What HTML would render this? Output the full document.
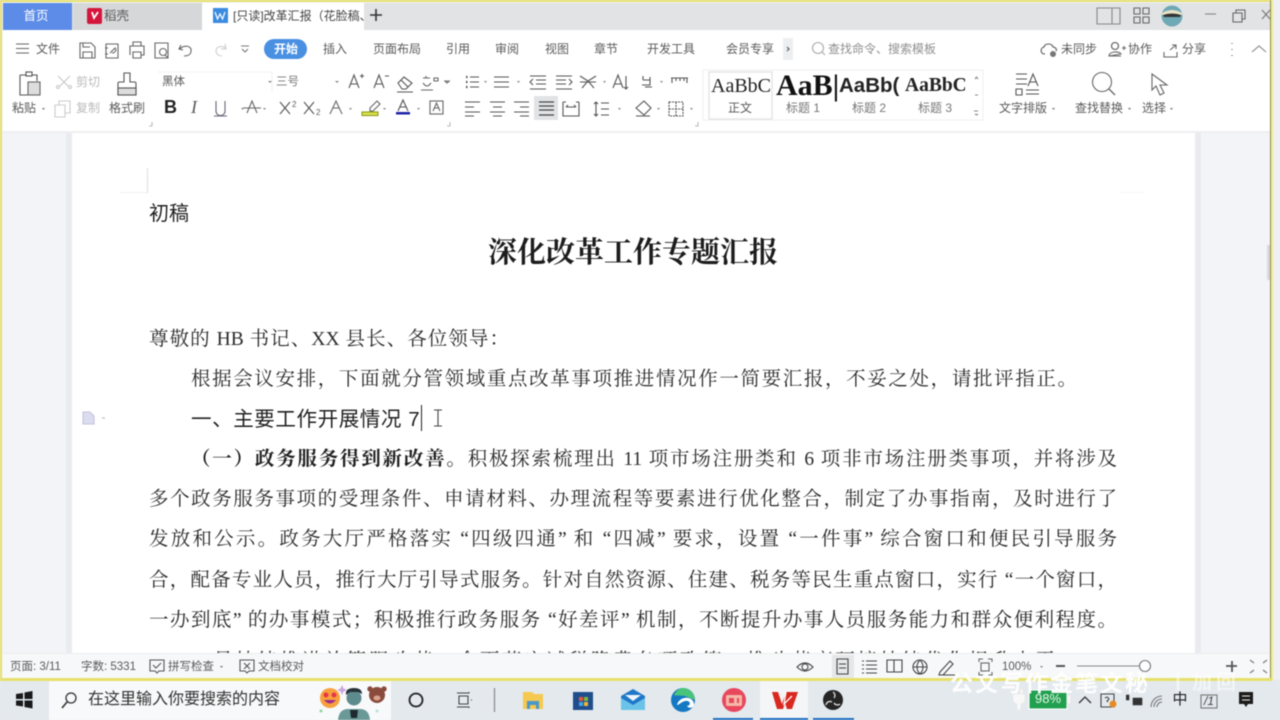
<!DOCTYPE html>
<html lang="zh"><head><meta charset="utf-8"><title>改革汇报</title>
<style>
html,body{margin:0;padding:0;background:#f0f1f4}
#w{position:relative;width:1280px;height:720px;overflow:hidden;background:#eef0f3;font-family:"Liberation Sans","Noto Sans CJK SC",sans-serif;color:#555;filter:blur(.6px)}
.b{position:absolute}
.t{position:absolute;white-space:nowrap;font-size:12px;line-height:20px;height:20px;color:#5a5a5a}
.c{transform:translateX(-50%)}
.l{position:absolute;left:149px;width:968px;height:40px;overflow:hidden;line-height:40px;font-family:"Liberation Serif","Noto Serif CJK SC",serif;font-size:19.5px;color:#2a2a2a;text-align:justify;text-align-last:justify}
.i{padding-left:42px;width:926px}
svg{position:absolute;left:0;top:0}
</style></head><body><div id="w">
<!-- window background -->
<div class="b" style="left:0;top:0;width:1272px;height:680px;background:#f3f4f7"></div>
<div class="b" style="left:3px;top:3px;width:1267px;height:27px;background:#e1e3e4"></div>
<div class="b" style="left:3px;top:3px;width:69px;height:27px;background:#5d8ce8"></div>
<div class="b" style="left:73px;top:3px;width:129px;height:27px;background:#d6d7d9"></div>
<div class="b" style="left:202px;top:3px;width:162px;height:27px;background:#fff"></div>
<div class="b" style="left:3px;top:30px;width:1267px;height:101px;background:#fff"></div>
<div class="b" style="left:3px;top:131px;width:1267px;height:2px;background:#eeeff2"></div>
<!-- page -->
<div class="b" style="left:66px;top:133px;width:6px;height:520px;background:#eaebef"></div>
<div class="b" style="left:1195px;top:133px;width:6px;height:520px;background:#eaebef"></div>
<div class="b" style="left:72px;top:133px;width:1123px;height:520px;background:#fff;overflow:hidden"></div>
<div class="b" style="left:147px;top:168px;width:1px;height:25px;background:#dcdcdc"></div>
<div class="b" style="left:120px;top:192px;width:27px;height:1px;background:#f2f2f2"></div>
<div class="b" style="left:1119px;top:192px;width:26px;height:1px;background:#f7f7f7"></div>
<!-- doc text -->
<div class="t" style="left:149px;top:204px;font-size:20px;color:#222">初稿</div>
<div class="t c" style="left:633px;top:243px;height:20px;font-family:'Liberation Serif','Noto Serif CJK SC',serif;font-weight:700;font-size:29px;line-height:20px;color:#1c1c1c">深化改革工作专题汇报</div>
<div class="l" style="top:320px;width:360px">尊敬的 HB 书记、XX 县长、各位领导：</div>
<div class="l i" style="top:360px;width:886px">根据会议安排，下面就分管领域重点改革事项推进情况作一简要汇报，不妥之处，请批评指正。</div>
<div class="t" style="left:191px;top:410px;font-size:20.5px;color:#222;letter-spacing:.6px">一、主要工作开展情况 7</div>
<div class="b" style="left:421px;top:405px;width:1px;height:26px;background:#222"></div>
<div class="l i" style="top:440px"><b style="color:#1f1f1f">（一）政务服务得到新改善</b>。积极探索梳理出 11 项市场注册类和 6 项非市场注册类事项，并将涉及</div>
<div class="l" style="top:480px">多个政务服务事项的受理条件、申请材料、办理流程等要素进行优化整合，制定了办事指南，及时进行了</div>
<div class="l" style="top:520px">发放和公示。政务大厅严格落实 “四级四通” 和 “四减” 要求，设置 “一件事” 综合窗口和便民引导服务</div>
<div class="l" style="top:561px">合，配备专业人员，推行大厅引导式服务。针对自然资源、住建、税务等民生重点窗口，实行 “一个窗口，</div>
<div class="l" style="top:601px">一办到底” 的办事模式；积极推行政务服务 “好差评” 机制，不断提升办事人员服务能力和群众便利程度。</div>
<div class="l i" style="top:642px;width:886px">二是持续推进放管服改革，全面落实减税降费各项政策，推动营商环境持续优化提升水平。</div>
<!-- status bar -->
<div class="b" style="left:3px;top:653px;width:1267px;height:25px;background:#f7f8fa;border-top:1px solid #eceded"></div>
<!-- frame -->
<div class="b" style="left:0;top:0;width:1272px;height:2px;background:#e6e06a"></div>
<div class="b" style="left:0;top:0;width:2px;height:680px;background:#e6e06a"></div>
<div class="b" style="left:1270px;top:0;width:3px;height:680px;background:#f0ec90;border-left:1px solid #8c8a50;box-sizing:border-box"></div>
<div class="b" style="left:1267px;top:245px;width:3px;height:35px;background:#d8d9e0"></div>
<!-- taskbar -->
<div class="b" style="left:0;top:680px;width:1280px;height:40px;background:#e3e9ed"></div>
<div class="b" style="left:49px;top:681px;width:342px;height:39px;background:#f8f9fa"></div>
<div class="b" style="left:760px;top:680px;width:48px;height:40px;background:#f3f5f7"></div>
<div class="b" style="left:713px;top:718px;width:40px;height:2px;background:#1e6fc0"></div>
<div class="b" style="left:760px;top:718px;width:48px;height:2px;background:#1e6fc0"></div>
<div class="b" style="left:813px;top:718px;width:41px;height:2px;background:#1e6fc0"></div>
<div class="b" style="left:0;top:678px;width:1272px;height:3px;background:#e6e06a"></div>

<!-- icon layer -->
<svg width="1280" height="720" viewBox="0 0 1280 720" fill="none" stroke="#555" stroke-width="1.1">
<!-- tabs -->
<rect x="87" y="8" width="15" height="16" rx="2" fill="#d5163c" stroke="none"/>
<path d="M92 12l2 6 4-6" stroke="#fff" stroke-width="1.8"/>
<rect x="213" y="8" width="15" height="15" fill="#3a8be0" stroke="none"/>
<path d="M215 12l2.5 7 2.5-5 2.5 5 2.5-7" stroke="#fff" stroke-width="1.2"/>
<path d="M370 15h12M376 9v12" stroke="#333" stroke-width="1.6"/>
<!-- window ctrl -->
<path d="M1097 8h23v16h-23zM1112 8v16" stroke="#888"/>
<path d="M1134 8h6v6h-6zM1143 8h6v6h-6zM1134 17h6v6h-6zM1143 17h6v6h-6z" stroke="#666"/>
<circle cx="1172" cy="16" r="10.5" fill="#6fa9b5" stroke="none"/>
<path d="M1162 13q10-6 20 0v2h-20z" fill="#e8e2c8" stroke="none"/>
<path d="M1163 15q9-3 18 0l-1 2h-16z" fill="#333" stroke="none"/>
<path d="M1205 14h11" stroke="#888"/>
<path d="M1233 13h9v9h-9zM1236 13v-3h9v9h-3" stroke="#666"/>
<path d="M1262 10l8 9M1270 10l-8 9" stroke="#777"/>
<!-- qat -->
<path d="M16 44h13M16 48.500h13M16 53h13" stroke="#666"/>
<path d="M80 43h11l4 4v11h-15zM83 58v-6h9v6M83 43v4h7" stroke="#666"/>
<path d="M106 44h12v14h-12zM105 48h3M105 54h3M110 53l5-5c2 2 0 5-3 5" stroke="#666"/>
<path d="M133 46v-4h8v4M130 55v-9h14v9h-3M133 52h8v6h-8z" stroke="#666"/>
<path d="M155 43h13v15h-13zM163 52m-3.500 0a3.500 3.500 0 1 0 7 0a3.500 3.500 0 1 0-7 0M165 55l3 3" stroke="#666"/>
<path d="M181 45l-2 4 4 1M180 49c3-4 12-4 11 2 0 4-4 5-7 5" stroke="#666"/>
<path d="M225 44l1 5-5 0M226 49c-3-4-10-3-10 2 0 3 3 5 6 5" stroke="#ccc"/>
<path d="M241 46h8M242 49l3 3 3-3" stroke="#777"/>
<rect x="783" y="38" width="10" height="22" fill="#eceef0" stroke="none"/>
<path d="M787 47l2 2-2 2" stroke="#555"/>
<circle cx="818" cy="48" r="5.500" stroke="#aaa"/><path d="M822 52l3 3" stroke="#aaa"/>
<path d="M1045 54c-5 0-5-6-1-7 1-4 8-4 9 0 3 0 4 3 3 4" stroke="#555"/><circle cx="1053" cy="54" r="3" fill="#777" stroke="none"/>
<circle cx="1115" cy="46" r="3.500"/><path d="M1109 56c0-5 11-5 12-2zM1109 56h12M1122 48h4M1124 46v4" stroke="#666"/>
<path d="M1164 52v5h13v-5M1170 50l6-5M1172 45h4v4" stroke="#666"/>
<path d="M1232 43v1M1232 49v1M1232 55v1" stroke="#888" stroke-width="1.5"/>
<path d="M1252 52l7-6 7 6" stroke="#888"/>
<!-- paste -->
<path d="M20 75h17v6M20 75v20h9" stroke="#555"/><rect x="26" y="72" width="6" height="4" fill="#fff"/>
<rect x="28" y="82" width="12" height="13" fill="#ddd" stroke="#666"/>
<path d="M58 76l10 10M70 76l-10 10" stroke="#c8c8c8"/><circle cx="58" cy="87" r="1.500" stroke="#c8c8c8"/><circle cx="70" cy="87" r="1.500" stroke="#c8c8c8"/>
<path d="M55 105h10v12h-10zM59 105v-4h11v12h-5" stroke="#ccc"/>
<path d="M124 73h6v9h5q1 0 1 2v11h-18v-11q0-2 1-2h5z" stroke="#555"/><rect x="118" y="88" width="18" height="7" fill="#ddd" stroke="#555"/>
<path d="M149 126h3v-4M447 126h3v-4M695 126h3v-4" stroke="#bbb"/>
<!-- font boxes -->
<path d="M158 72h114v20" stroke="#f2f2f2"/>
<path d="M268 81l4 0-2 2zM335 81l4 0-2 2z" fill="#888" stroke="none"/>
<!-- fmt row1 -->
<path d="M349 88l5-13 5 13M351 84h7M360 76h4M362 74v4" stroke="#555"/>
<path d="M374 88l5-13 5 13M376 84h7M385 76h4" stroke="#555"/>
<path d="M398 83l6-6 8 6-6 6h-4zM401 80l7 7M397 92h16" stroke="#555"/>
<path d="M423 78h7M426 76v2M423 83c3 4 5 4 8 0M421 90h12" stroke="#666"/>
<path d="M434 78h4v3h-4zM445 81h4l-2 2z" stroke="#666"/>
<!-- fmt row2 -->
<path d="M216 101v10c0 6 9 6 9 0v-10M214 116h13" stroke="#667"/>
<path d="M247 113l5-12 5 12M243 108h18" stroke="#666"/>
<path d="M280 102l10 12M290 102l-10 12" stroke="#555"/>
<path d="M304 102l10 12M314 102l-10 12" stroke="#555"/>
<path d="M330 114l6-13 6 13M333 108h6" stroke="#666"/>
<path d="M370 108l7-7 3 3-7 7h-3z" stroke="#666"/><rect x="362" y="112" width="16" height="3.500" fill="#dde34a" stroke="#8a9a20"/>
<path d="M398 111l5-11 5 11M400 107h6" stroke="#555"/><rect x="396" y="112" width="14" height="2.500" fill="#1c22a8" stroke="none"/>
<rect x="430" y="101" width="13" height="13" stroke="#666"/><path d="M433 111l3.500-8 3.500 8M434.500 108h4" stroke="#666"/>
<path d="M263 108h3l-1.500 2zM241 108h3l-1.500 2zM349 108h3l-1.500 2zM383 108h3l-1.500 2zM417 108h3l-1.500 2zM447 81h3l-1.500 2z" fill="#888" stroke="none"/>
<!-- para row1 -->
<g stroke="#555">
<path d="M470 77h9M470 82h9M470 87h9M494 77h9M494 82h9M494 87h9"/>
<path d="M466 77h1.500M466 82h1.500M466 87h1.500" stroke-width="2.200"/>
<path d="M499 77h10M499 82h10M499 87h10"/>
<path d="M530 76h16M536 80h10M536 84h10M530 89h16M533 79l-3 3 3 3"/>
<path d="M556 76h16M556 80h10M556 84h10M556 89h16M569 79l3 3-3 3"/>
<path d="M580 76l8 5-6 7M596 76l-8 5 6 7M580 82h16"/>
<path d="M613 88l5-13 5 13M615 84h6M626 76v13M624 87l2 2 2-2"/>
<path d="M643 76v4M643 80h7M650 77v8h-8M645 87h7"/>
<path d="M671 78h17M672 78v5M687 78v5M676 78v3M680 78v3M684 78v3"/>
</g>
<rect x="534" y="96" width="24" height="24" fill="#e2e3e6" stroke="none"/>
<g stroke="#555">
<path d="M465 102h15M465 107h9M465 112h15M465 116h9"/>
<path d="M490 102h15M493 107h9M490 112h15M493 116h9"/>
<path d="M514 102h15M520 107h9M514 112h15M520 116h9"/>
<path d="M539 102h15M539 106h15M539 110h15M539 115h15" stroke="#444" stroke-width="1.300"/>
<path d="M563 102v14h16v-14M566 107h10M566 107l2-2M576 107l-2-2M563 102h3M576 102h3"/>
<path d="M596 102v14M594 104l2-2 2 2M594 114l2 2 2-2M601 103h8M601 109h8M601 115h8"/>
<path d="M636 108l8-7 7 7-7 7zM636 116h14"/>
<path d="M669 102h14v14h-14zM676 102v14M669 109h14" stroke-dasharray="2 1"/>
</g>
<path d="M618 108h3l-1.500 2zM657 108h3l-1.500 2zM690 108h3l-1.500 2zM484 81h3l-1.500 2zM517 81h3l-1.500 2zM603 81h3l-1.500 2zM660 81h3l-1.500 2z" fill="#888" stroke="none"/>
<!-- style gallery -->
<rect x="703" y="70" width="280" height="50" stroke="#f0f0f0" fill="#fff"/>
<rect x="709" y="72" width="63" height="47" stroke="#e6e6e6" stroke-width="1.500" fill="#fff"/>
<path d="M975 79l1.500-2 1.500 2M975 95h3M974 111h4M975 114l1.500 1 1.500-1" stroke="#888"/>
<!-- right ribbon -->
<path d="M1016 74h11M1016 79h11M1016 84h11M1016 89h6v6h-6zM1026 90h13M1026 94h13M1028 86l5-12 5 12M1030 82h6" stroke="#555"/>
<circle cx="1102" cy="82" r="9.500" stroke="#666"/><path d="M1109 89l6 6" stroke="#666" stroke-width="1.300"/>
<path d="M1152 74L1152 90L1156 86L1160 95L1164 93L1160 85L1167 85Z" stroke="#666"/>
<path d="M1052 108h3l-1.500 2zM1128 108h3l-1.500 2zM1170 108h3l-1.500 2zM42 108h3l-1.500 2z" fill="#777" stroke="none"/>
<!-- doc icon + ibeam -->
<path d="M83 412h7l4 4v8h-11z" fill="#dcdcf0" stroke="#c3c3dd"/>
<path d="M102 418h3" stroke="#bbb"/>
<path d="M434 410h8M438 410v16M434 426h8" stroke="#444"/>
<!-- status -->
<path d="M150 660h14v11h-5l-2 2-2-2h-5zM153 665l3 3 5-5" stroke="#555"/>
<path d="M240 660h14v11h-5l-2 2-2-2h-5zM244 663l6 6M250 663l-6 6" stroke="#555"/>
<path d="M220 666h3l-1.500 2z" fill="#777" stroke="none"/>
<path d="M797 667q8-8 16 0q-8 8-16 0z" stroke="#444"/><circle cx="805" cy="667" r="3" stroke="#444"/>
<rect x="832" y="655" width="22" height="23" fill="#e6e7ea" stroke="none"/>
<path d="M837 659h11v15h-11zM839 664h7M839 668h7" stroke="#444"/>
<path d="M862 661h2M866 661h11M862 665h2M866 665h11M862 669h2M866 669h11M862 673h2M866 673h11" stroke="#444"/>
<path d="M887 660h7v12h-7zM894 660h8v12h-8" stroke="#444"/>
<circle cx="920" cy="667" r="7" stroke="#444"/><path d="M913 667h14M920 660c-4 4-4 10 0 14M920 660c4 4 4 10 0 14" stroke="#444"/>
<path d="M940 672l10-11 3 3-10 11-4 0zM939 675h16" stroke="#444"/>
<path d="M979 662v-3h4M988 659h4v3M992 672v3h-4M983 675h-4v-3" stroke="#666"/><rect x="981" y="663" width="8" height="8" stroke="#666"/>
<path d="M1040 666h3l-1.500 2z" fill="#888" stroke="none"/>
<path d="M1056 666h9" stroke="#555" stroke-width="2"/>
<path d="M1077 666h62" stroke="#888"/><circle cx="1145" cy="666" r="5.500" fill="#fff" stroke="#777"/>
<path d="M1226 666h11M1232 661v11" stroke="#555" stroke-width="1.800"/>
<path d="M1250 660l4 3M1267 660l-4 3M1250 673l4-3M1267 673l-4-3" stroke="#777"/>
<!-- taskbar -->
<path d="M16 694l7-1v6h-7zM24.500 692.500l8-1.500v8h-8zM16 700.500h7v6l-7-1zM24.500 700.500h8v8l-8-1.500z" fill="#1a1a1a" stroke="none"/>
<circle cx="71" cy="698" r="5" stroke="#333" stroke-width="1.300"/><path d="M67 702l-5 6" stroke="#333" stroke-width="1.600"/>
<!-- emoji -->
<circle cx="330" cy="698" r="10" fill="#f7a13c" stroke="none"/>
<circle cx="326" cy="695" r="2.500" fill="#e8354b" stroke="none"/><circle cx="334" cy="695" r="2.500" fill="#e8354b" stroke="none"/>
<path d="M324 700q6 7 12 0z" fill="#a02a8a" stroke="none"/>
<path d="M342 685l1.500 3.500 3.500 1.500-3.500 1.500-1.500 3.500-1.500-3.500-3.500-1.500 3.500-1.500z" fill="#c9a5e0" stroke="none"/>
<circle cx="354" cy="698" r="7.500" fill="#5d8a8c" stroke="none"/>
<path d="M346 695q-1-7 8-7 8 0 8 6l-4-2h-8z" fill="#263238" stroke="none"/>
<path d="M338 720q1-11 10-11h12q9 0 10 11z" fill="#6a9a98" stroke="none"/>
<path d="M350 710h8l-1 8h-6z" fill="#1e2a30" stroke="none"/>
<circle cx="377" cy="695" r="8" fill="#8a4b3d" stroke="none"/><circle cx="370" cy="689" r="2.700" fill="#8a4b3d" stroke="none"/><circle cx="384" cy="689" r="2.700" fill="#8a4b3d" stroke="none"/>
<ellipse cx="377" cy="698" rx="3.500" ry="2.500" fill="#d9a48c" stroke="none"/>
<circle cx="321" cy="711" r="1.500" fill="#8fd89a" stroke="none"/><circle cx="377" cy="711" r="1.500" fill="#b9e5e0" stroke="none"/>
<circle cx="416" cy="700" r="6.500" stroke="#222" stroke-width="1.800"/>
<path d="M457 693h12v-1M457 707h12v1M459 696h9v8h-9zM471 700h1" stroke="#444"/>
<path d="M494.500 688v24" stroke="#888" stroke-width="1.200"/>
<path d="M523 692h9l2 2h9v15h-20z" fill="#f5c94f" stroke="none"/>
<path d="M527 701h12v8h-3v-4h-6v4h-3z" fill="#4c97c9" stroke="none"/>
<path d="M573 692h20v18h-20z" fill="#1f4e8c" stroke="none"/>
<rect x="579" y="697" width="4" height="4" fill="#e8553b" stroke="none"/><rect x="584" y="697" width="4" height="4" fill="#7fb93b" stroke="none"/><rect x="579" y="702" width="4" height="4" fill="#3fa7e6" stroke="none"/><rect x="584" y="702" width="4" height="4" fill="#f3b533" stroke="none"/>
<path d="M621 696l12-7 12 7v14h-24z" fill="#1f78c8" stroke="none"/>
<path d="M621 698l12 7 12-7v12h-24z" fill="#6cc3ea" stroke="none"/>
<path d="M625 695h16l-8 6z" fill="#eef6fb" stroke="none"/>
<circle cx="683" cy="700" r="12" fill="#1579c2" stroke="none"/>
<path d="M677 705c2-9 16-10 17-1 0 4-5 5-7 2 5-1 3-6-2-5-4 1-6 4-8 4z" fill="#fff" stroke="none"/>
<path d="M683 688c6 0 12 5 12 12l-10-4c-4-1-9 0-11-1 2-4 5-7 9-7z" fill="#49c47a" stroke="none"/>
<circle cx="734" cy="700" r="12" fill="#e8475e" stroke="none"/>
<rect x="726" y="695" width="16" height="11" rx="1.500" fill="#f4b8a6" stroke="none"/><rect x="729" y="698" width="5" height="5" fill="#e8475e" stroke="none"/><rect x="737" y="698" width="2" height="5" fill="#e8475e" stroke="none"/>
<path d="M772 692h6l4 12 4-12h12l-6 17h-5l-2-6-2 6h-6z" fill="#d8281f" stroke="none"/>
<path d="M786 692l-2 12 8-8" stroke="#fff" stroke-width="1.300"/>
<circle cx="833" cy="700" r="10" fill="#252525" stroke="none"/>
<path d="M833 692a4 4 0 0 1 1 6M826 705a4 4 0 0 1 6-3M840 704a4 4 0 0 1-6-1" stroke="#ddd" stroke-width="1.300"/>
<!-- tray -->
<path d="M1015 689h3v5h-3zM1020 689h3v5h-3zM1013 694h12v6q0 3-4 4v6h-4v-6q-4-1-4-4z" fill="#f8f8f8" stroke="#e4e4e4" stroke-width=".5"/>
<rect x="1029" y="690" width="38" height="19" fill="#21a04f" stroke="#fff"/>
<rect x="1067" y="695" width="4" height="9" fill="#f6f6f6" stroke="#ddd" stroke-width=".5"/>
<path d="M1079 703l6-6 6 6" stroke="#333" stroke-width="1.300"/>
<path d="M1101 694h13v13h-13zM1105 698q3-2 4 1l-2 2 1 1" stroke="#444"/>
<circle cx="1113" cy="704" r="3.500" fill="#e88a24" stroke="none"/>
<path d="M1126 695h3v5h-3M1133 698h9v7h-9z" fill="#333" stroke="#333" stroke-width=".6"/>
<path d="M1151 707a11 11 0 0 1 11-11M1154 707a8 8 0 0 1 8-8M1157 707a5 5 0 0 1 5-5" stroke="#777"/>
<rect x="1201" y="695" width="16" height="13" stroke="#777"/>
<path d="M1239 692h14v12h-5l-2 3-2-3h-5z" fill="#1c1c1c" stroke="none"/><path d="M1242 696h8M1242 700h8" stroke="#eee" stroke-width="1"/>
</svg>

<!-- labels -->
<div class="t c" style="left:36px;top:6px;color:#fff;font-size:12.5px">首页</div>
<div class="t" style="left:104px;top:6px;font-size:12.5px">稻壳</div>
<div class="t" style="left:233px;top:6px;font-size:12px;color:#444;width:131px;overflow:hidden">[只读]改革汇报（花脸稿、</div>
<div class="t" style="left:36px;top:39px">文件</div>
<div class="b" style="left:264px;top:39px;width:43px;height:20px;border-radius:10px;background:#4a90e2"></div>
<div class="t c" style="left:286px;top:39px;color:#fff;font-weight:700">开始</div>
<div class="t c" style="left:335px;top:39px">插入</div><div class="t c" style="left:397px;top:39px">页面布局</div>
<div class="t c" style="left:458px;top:39px">引用</div><div class="t c" style="left:507px;top:39px">审阅</div>
<div class="t c" style="left:557px;top:39px">视图</div><div class="t c" style="left:606px;top:39px">章节</div>
<div class="t c" style="left:671px;top:39px">开发工具</div><div class="t c" style="left:750px;top:39px">会员专享</div>
<div class="t" style="left:828px;top:39px;color:#8f8f8f">查找命令、搜索模板</div>
<div class="t" style="left:1061px;top:39px">未同步</div><div class="t" style="left:1128px;top:39px">协作</div><div class="t" style="left:1182px;top:39px">分享</div>
<div class="t" style="left:76px;top:72px;color:#bbb">剪切</div><div class="t" style="left:76px;top:98px;color:#bbb">复制</div>
<div class="t" style="left:12px;top:98px">粘贴</div><div class="t" style="left:109px;top:98px">格式刷</div>
<div class="t" style="left:162px;top:72px;font-size:11.500px">黑体</div><div class="t" style="left:276px;top:72px;font-size:11.500px;color:#777">三号</div>
<div class="t" style="left:164px;top:96px;font-size:18px;line-height:22px;height:22px;font-weight:700;color:#222">B</div>
<div class="t" style="left:191px;top:96px;font-family:'Liberation Serif',serif;font-style:italic;font-size:18px;line-height:22px;height:22px">I</div>
<div class="t" style="left:292px;top:100px;font-size:8px;line-height:10px;height:10px">2</div>
<div class="t" style="left:316px;top:108px;font-size:8px;line-height:10px;height:10px">2</div>
<div class="b" style="left:711px;top:72px;width:61px;height:29px;overflow:hidden"><div class="t" style="left:0;top:4px;font-family:'Liberation Serif',serif;font-size:20px;color:#222">AaBbC</div></div>
<div class="b" style="left:776px;top:70px;width:62px;height:32px;overflow:hidden"><div class="t" style="left:0;top:6px;font-family:'Liberation Serif',serif;font-size:30px;font-weight:700;color:#111">AaB|</div></div>
<div class="b" style="left:839px;top:72px;width:62px;height:29px;overflow:hidden"><div class="t" style="left:0;top:4px;font-size:20.500px;font-weight:700;color:#222">AaBb(</div></div>
<div class="b" style="left:905px;top:72px;width:60px;height:29px;overflow:hidden"><div class="t" style="left:0;top:4px;font-family:'Liberation Serif',serif;font-size:19.500px;font-weight:700;color:#222">AaBbC</div></div>
<div class="t c" style="left:740px;top:98px">正文</div><div class="t c" style="left:803px;top:98px;color:#777">标题 1</div>
<div class="t c" style="left:869px;top:98px;color:#777">标题 2</div><div class="t c" style="left:935px;top:98px;color:#777">标题 3</div>
<div class="t" style="left:999px;top:98px">文字排版</div><div class="t" style="left:1075px;top:98px">查找替换</div><div class="t" style="left:1142px;top:98px">选择</div>
<div class="t" style="left:10px;top:657px;font-size:11.500px">页面: 3/11</div>
<div class="t" style="left:81px;top:657px;font-size:11.500px">字数: 5331</div>
<div class="t" style="left:168px;top:657px;font-size:11.500px">拼写检查</div>
<div class="t" style="left:258px;top:657px;font-size:11.500px">文档校对</div>
<div class="t" style="left:1002px;top:657px;font-size:11.500px">100%</div>
<div class="t" style="left:88px;top:690px;font-size:16px;color:#333">在这里输入你要搜索的内容</div>
<div class="t c" style="left:1048px;top:689px;color:#e8f5ea;font-size:13px">98%</div>
<div class="t c" style="left:1180px;top:690px;font-size:15px;color:#222">中</div>
<div class="t c" style="left:1209px;top:691px;font-size:12px;font-style:italic;color:#444">/1</div>
<!-- watermark -->
<div class="t" style="left:950px;top:673px;font-size:23px;font-weight:700;color:#fff;opacity:.95;letter-spacing:2px">公文写作金笔文秘</div>
<div class="t" style="left:1168px;top:673px;font-size:20px;font-weight:700;color:#fff;opacity:.55;letter-spacing:4px">丨加回</div>
</div></body></html>
